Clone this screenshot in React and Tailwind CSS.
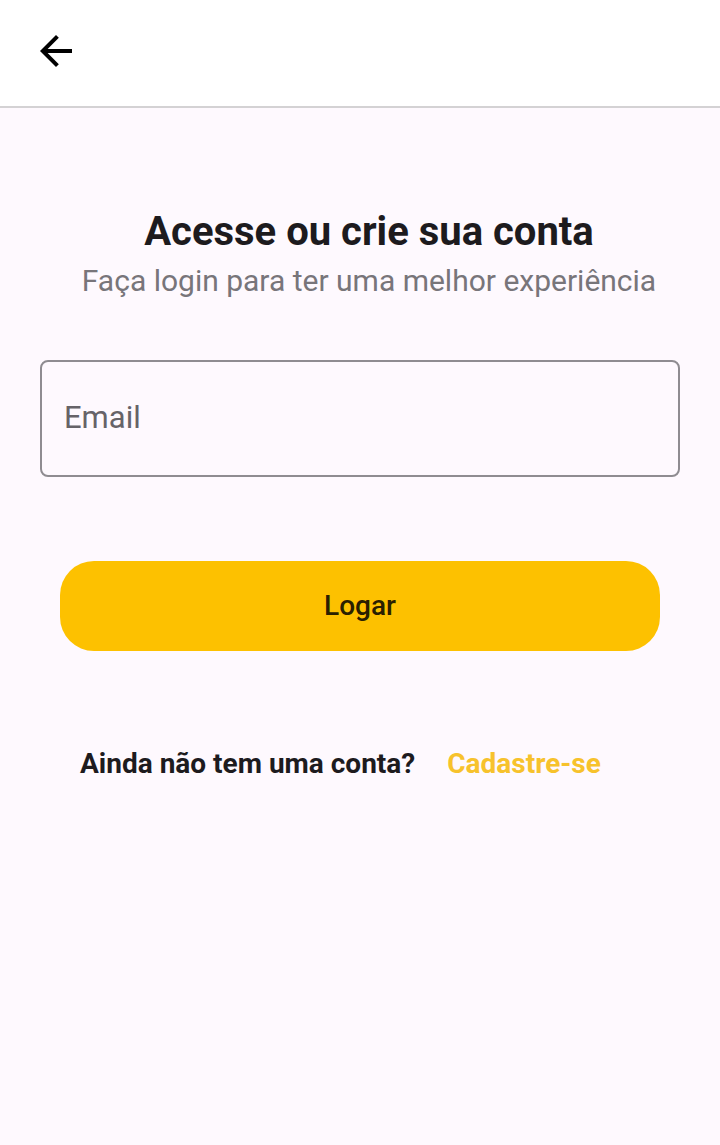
export default function App() {
  return (
    <div className="min-h-[1145px] flex flex-col bg-[#fef9fe]" style={{ fontFamily: 'Roboto, "Noto Sans", sans-serif' }}>
      <header className="h-[108px] bg-white border-b-2 border-[#d4d2d4] flex items-center px-8">
        <button className="w-12 h-12 flex items-center justify-center -mt-1">
          <svg width="48" height="48" viewBox="0 0 24 24" fill="#000">
            <path d="M20 11H7.83l5.59-5.59L12 4l-8 8 8 8 1.41-1.41L7.83 13H20v-2z" />
          </svg>
        </button>
      </header>

      <main className="flex flex-col items-center">
        <div className="pl-[18px] flex flex-col items-center">
          <h1 className="mt-[100px] text-[40px] leading-[48px] font-bold text-[#1d1b1e]">Acesse ou crie sua conta</h1>
          <p className="mt-[7px] text-[30px] leading-[36px] text-[#78757a]">Faça login para ter uma melhor experiência</p>
        </div>

        <div className="mt-[61px] w-[640px] h-[117px] border-2 border-[#8f8c91] rounded-[8px] flex items-center pl-[22px] pr-6">
          <span className="text-[31px] text-[#666368]">Email</span>
        </div>

        <button className="mt-[84px] w-[600px] h-[90px] rounded-[34px] bg-[#fdc100] text-[28px] font-medium text-[#2a2000]">
          Logar
        </button>

        <div className="mt-[96px] w-[560px] flex items-center gap-8 text-[28px] leading-[34px] font-bold">
          <span className="text-[#1d1b1e]">Ainda não tem uma conta?</span>
          <span className="text-[#f7c22c]">Cadastre-se</span>
        </div>
      </main>
    </div>
  )
}
